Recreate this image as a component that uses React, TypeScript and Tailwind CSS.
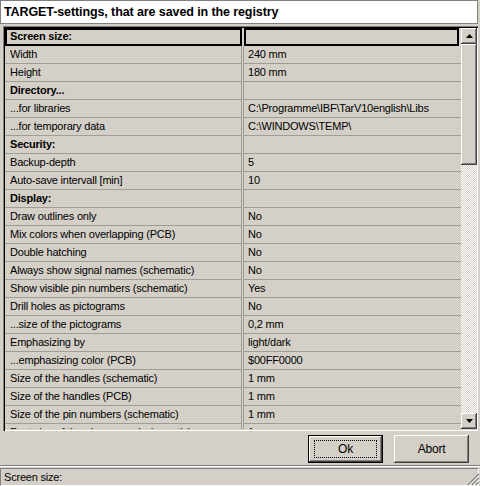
const rows: { label: string; value: string; bold?: boolean }[] = [
  { label: "Width", value: "240 mm" },
  { label: "Height", value: "180 mm" },
  { label: "Directory...", value: "", bold: true },
  { label: "...for libraries", value: "C:\\Programme\\IBF\\TarV10english\\Libs" },
  { label: "...for temporary data", value: "C:\\WINDOWS\\TEMP\\" },
  { label: "Security:", value: "", bold: true },
  { label: "Backup-depth", value: "5" },
  { label: "Auto-save intervall [min]", value: "10" },
  { label: "Display:", value: "", bold: true },
  { label: "Draw outlines only", value: "No" },
  { label: "Mix colors when overlapping (PCB)", value: "No" },
  { label: "Double hatching", value: "No" },
  { label: "Always show signal names (schematic)", value: "No" },
  { label: "Show visible pin numbers (schematic)", value: "Yes" },
  { label: "Drill holes as pictograms", value: "No" },
  { label: "...size of the pictograms", value: "0,2 mm" },
  { label: "Emphasizing by", value: "light/dark" },
  { label: "...emphasizing color (PCB)", value: "$00FF0000" },
  { label: "Size of the handles (schematic)", value: "1 mm" },
  { label: "Size of the handles (PCB)", value: "1 mm" },
  { label: "Size of the pin numbers (schematic)", value: "1 mm" },
  { label: "Font size of the pin names (schematic)", value: "1 mm" },
];

const raised =
  "shadow-[inset_-1px_-1px_0_#404040,inset_1px_1px_0_#ffffff,inset_-2px_-2px_0_#808080,inset_2px_2px_0_#d4d0c8]";

function Arrow({ up }: { up?: boolean }) {
  return (
    <svg width="7" height="4" viewBox="0 0 7 4">
      <path d={up ? "M3.5 0 L7 4 L0 4 Z" : "M0 0 L7 0 L3.5 4 Z"} fill="#000" />
    </svg>
  );
}

function Row({ label, value, bold }: { label: string; value: string; bold?: boolean }) {
  return (
    <div className="flex h-[18px] shrink-0">
      <div className={`w-[237px] shrink-0 border-r border-b border-[#a09c98] pl-[5px] leading-[17px] ${bold ? "font-bold" : ""}`}>
        {label}
      </div>
      <div className="w-[1px] shrink-0" />
      <div className="flex-1 border-l border-b border-[#a09c98] pl-[4px] leading-[17px]">{value}</div>
    </div>
  );
}

export default function App() {
  return (
    <div className="flex h-[486px] w-[480px] flex-col overflow-hidden bg-[#d4d0c8] font-['Liberation_Sans',Arial,sans-serif] text-[11px] tracking-[-0.2px] text-black">
      <div className="h-[24px] w-[478px] shrink-0 border border-[#808080] bg-white pl-[3px] text-[12.5px] leading-[22px] font-bold tracking-[-0.1px]">
        TARGET-settings, that are saved in the registry
      </div>

      <div className="ml-[3px] mt-[2px] flex h-[405px] w-[475px] shrink-0 shadow-[inset_1px_1px_0_#808080,inset_2px_2px_0_#000,inset_-1px_-1px_0_#ffffff] p-[2px] pr-[1px]">
        <div className="flex flex-1 flex-col overflow-hidden">
          <div className="flex h-[18px] shrink-0">
            <div className="w-[237px] shrink-0 pl-[5px] font-bold leading-[17px] shadow-[inset_2px_2px_0_#000,inset_-2px_-2px_0_#000]">
              Screen size:
            </div>
            <div className="w-[1px] shrink-0" />
            <div className="ml-[1px] flex-1 mr-[2px] shadow-[inset_2px_2px_0_#000,inset_-2px_-2px_0_#000]" />
          </div>
          {rows.map((r) => (
            <Row key={r.label} {...r} />
          ))}
        </div>

        <div className="flex w-[16px] shrink-0 flex-col bg-[image:repeating-conic-gradient(#ffffff_0%_25%,#d4d0c8_0%_50%)] bg-[length:2px_2px]">
          <div className={`flex h-[16px] shrink-0 items-center justify-center bg-[#d4d0c8] ${raised}`}>
            <Arrow up />
          </div>
          <div className={`h-[121px] shrink-0 bg-[#d4d0c8] ${raised}`} />
          <div className="flex-1" />
          <div className={`flex h-[16px] shrink-0 items-center justify-center bg-[#d4d0c8] ${raised}`}>
            <Arrow />
          </div>
        </div>
      </div>

      <div className="flex h-[34px] shrink-0 items-start justify-end gap-[11px] pr-[11px] pt-[4px]">
        <button className="flex h-[28px] w-[75px] items-center justify-center border border-black bg-[#d4d0c8] p-0 text-[12px] shadow-[inset_-1px_-1px_0_#404040,inset_1px_1px_0_#ffffff,inset_-2px_-2px_0_#808080]">
          <span className="flex h-[18px] w-[63px] items-center justify-center border border-dotted border-black">Ok</span>
        </button>
        <button className={`flex h-[28px] w-[75px] items-center justify-center bg-[#d4d0c8] text-[12px] ${raised}`}>
          Abort
        </button>
      </div>

      <div className="h-[2px] shrink-0 border-t border-b border-t-[#808080] border-b-white" />

      <div className="relative flex flex-1 items-stretch pt-[1px] pr-[1px]">
        <div className="flex-1 border border-t-[#808080] border-l-[#808080] border-b-white border-r-white pl-[3px] leading-[16px]">
          Screen size:
        </div>
        <svg className="absolute right-0 bottom-0" width="13" height="13" viewBox="0 0 13 13">
          <path d="M12 1 L1 12 M12 5 L5 12 M12 9 L9 12" stroke="#808080" strokeWidth="1.4" />
          <path d="M12 2.5 L2.5 12 M12 6.5 L6.5 12 M12 10.5 L10.5 12" stroke="#ffffff" strokeWidth="1" />
        </svg>
      </div>
    </div>
  );
}
